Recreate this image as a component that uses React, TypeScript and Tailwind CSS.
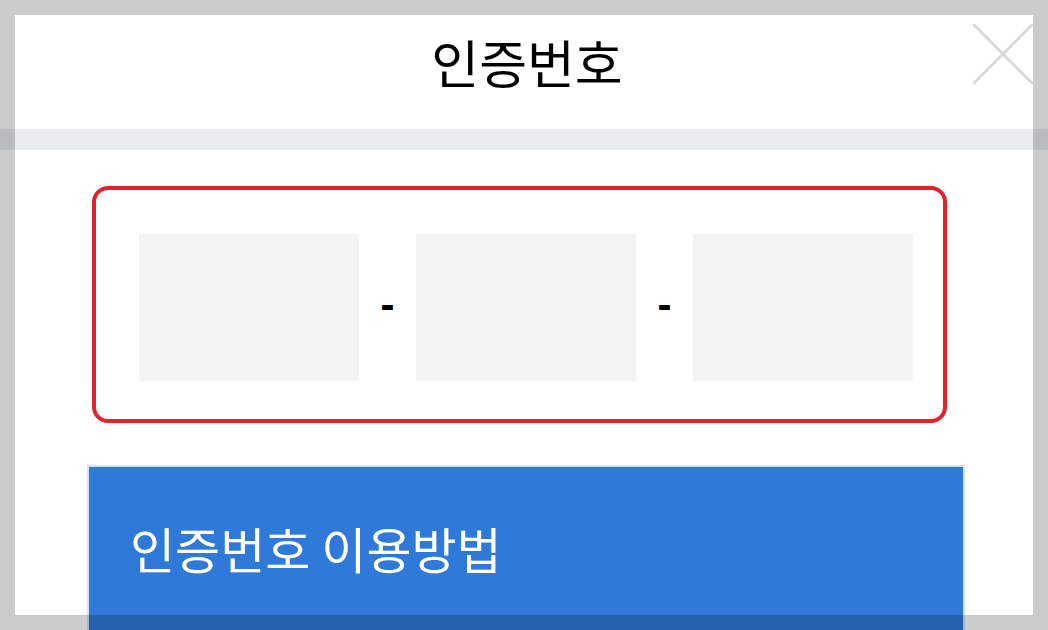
const font = { fontFamily: '"Noto Sans CJK KR", "Noto Sans", sans-serif' };

function CodeBox() {
  return <div className="w-[220px] h-[147px] bg-[#f3f3f3]" />;
}

function Dash() {
  return (
    <div
      className="w-[57px] h-[147px] flex items-center justify-center text-[42px] leading-none font-bold text-black pb-[6px]"
      style={{ fontFamily: '"Liberation Sans", sans-serif' }}
    >
      -
    </div>
  );
}

export default function App() {
  return (
    <div className="relative w-[1048px] h-[630px] overflow-hidden bg-white" style={font}>
      {/* header */}
      <div className="relative h-[129px] flex justify-center pt-[36px]">
        <h1 className="text-[52px] leading-none text-black pl-[6px]">인증번호</h1>
        <button className="absolute left-[973px] top-[24px] w-[60px] h-[60px]" aria-label="닫기">
          <svg width="60" height="60" viewBox="0 0 60 60">
            <path d="M0 0 L60 60 M60 0 L0 60" stroke="#d9d9d9" strokeWidth="3" />
          </svg>
        </button>
      </div>
      <div className="h-[21px] bg-[#e8ecef]" />

      {/* code input */}
      <div className="pl-[92px] pt-[36px]">
        <div className="w-[855px] h-[237px] border-4 border-[#e3222b] rounded-[16px] flex items-start pl-[43px] pt-[44px]">
          <CodeBox />
          <Dash />
          <CodeBox />
          <Dash />
          <CodeBox />
        </div>
      </div>

      {/* guide button */}
      <div className="pl-[87px] pt-[42px]">
        <div className="w-[878px] h-[200px] bg-[#2f7ad9] border-2 border-[#d2e3f6] pl-[41px] pt-[56px]">
          <span className="block text-[49px] leading-none text-white">인증번호 이용방법</span>
        </div>
      </div>

      {/* dim frame */}
      <div className="absolute left-0 top-0 w-[1048px] h-[15px] bg-black/20" />
      <div className="absolute left-0 top-[615px] w-[1048px] h-[15px] bg-black/20" />
      <div className="absolute left-0 top-[15px] w-[15px] h-[600px] bg-black/20" />
      <div className="absolute left-[1033px] top-[15px] w-[15px] h-[600px] bg-black/20" />
    </div>
  );
}
